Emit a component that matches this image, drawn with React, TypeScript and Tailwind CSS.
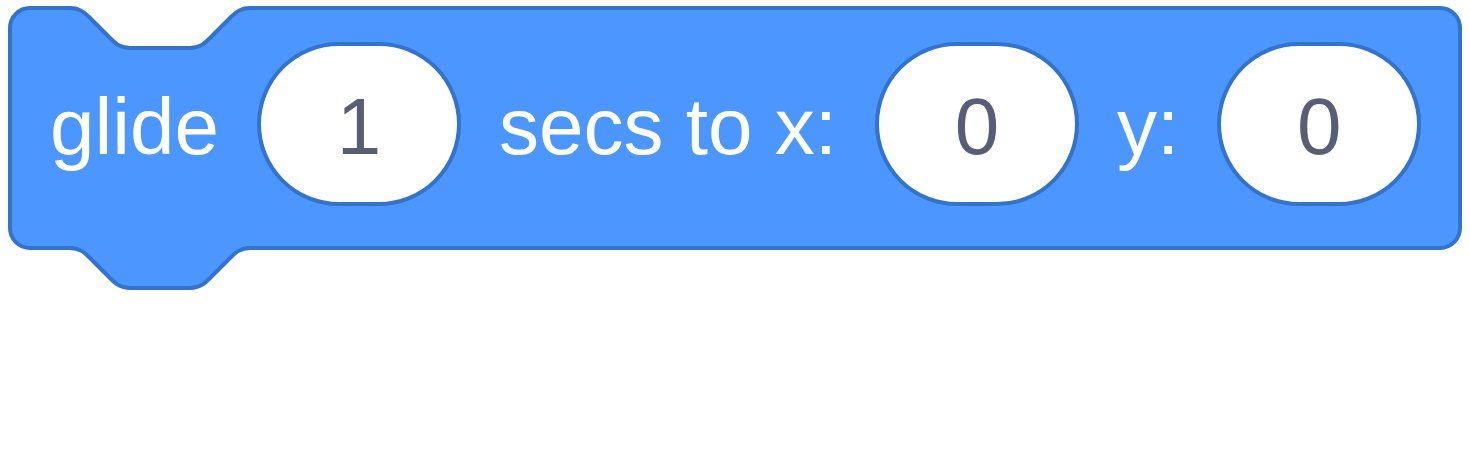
const BLOCK_PATH =
  "M 10,24 A 20,20 0 0 1 30,4 H 70 c 10,0 15,5 20,10 l 20,20 c 5,5 10,10 20,10 h 60 c 10,0 15,-5 20,-10 l 20,-20 c 5,-5 10,-10 20,-10 H 1440 a 20,20 0 0 1 20,20 V 224 a 20,20 0 0 1 -20,20 H 250 c -10,0 -15,5 -20,10 l -20,20 c -5,5 -10,10 -20,10 h -60 c -10,0 -15,-5 -20,-10 l -20,-20 c -5,-5 -10,-10 -20,-10 H 30 a 20,20 0 0 1 -20,-20 z";

function NumberInput({ value }: { value: string }) {
  return (
    <div className="flex h-[164px] w-[204px] shrink-0 items-center justify-center rounded-full border-4 border-[#3373cc] bg-white pt-[6px] text-[80px] leading-none text-[#575e75]">
      {value}
    </div>
  );
}

function Label({ children }: { children: string }) {
  return <span className="shrink-0 whitespace-nowrap pt-[6px] text-[80px] leading-none text-white">{children}</span>;
}

export default function App() {
  return (
    <div className="relative h-[470px] w-[1470px] bg-white font-['Liberation_Sans',Arial,sans-serif]">
      {/* block shape with notch and tab */}
      <svg className="absolute left-0 top-0" width="1470" height="300" viewBox="0 0 1470 300">
        <path d={BLOCK_PATH} fill="#4c97ff" stroke="#3373cc" strokeWidth="4" />
      </svg>

      <div className="relative ml-[10px] mt-[4px] flex h-[240px] w-[1450px] items-center gap-[38px] pl-[40px]">
        <Label>glide</Label>
        <NumberInput value="1" />
        <Label>secs to x:</Label>
        <NumberInput value="0" />
        <Label>y:</Label>
        <NumberInput value="0" />
      </div>
    </div>
  );
}
